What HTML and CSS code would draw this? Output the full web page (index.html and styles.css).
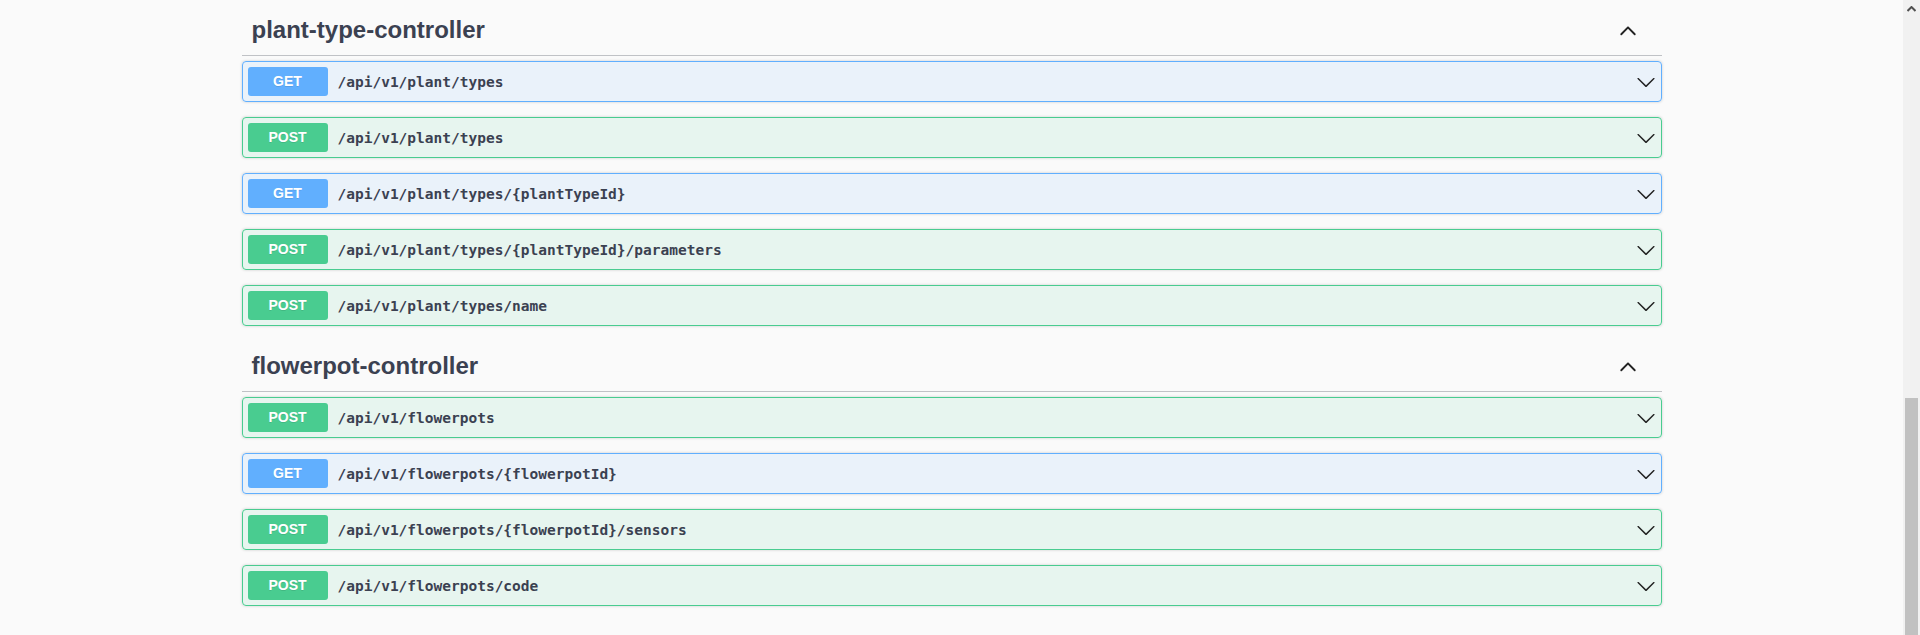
FILE: index.html
```html
<!DOCTYPE html>
<html lang="en">
<head>
<meta charset="utf-8">
<title>Swagger UI</title>
<link rel="stylesheet" href="styles.css">
</head>
<body>
<div class="page">
  <main class="main">
    <div class="wrapper">
      <section class="tag-section">
        <h3 class="tag">
          <span class="tag-name">plant-type-controller</span>
          <span class="tag-toggle"><svg width="20" height="20" viewBox="0 0 20 20"><path d="M17.418 14.908c-.374.374-.98.374-1.354 0L10 8.843 3.936 14.908c-.374.374-.98.374-1.354 0-.374-.373-.374-.98 0-1.353l6.74-6.74c.375-.375.98-.375 1.355 0l6.74 6.74c.375.374.375.98 0 1.354z"/></svg></span>
        </h3>
        <div class="op op-get"><div class="op-summary"><span class="method">GET</span><span class="path">/api/v1/plant/types</span><svg class="arrow" width="20" height="20" viewBox="0 0 20 20"><path d="M17.418 6.109c.272-.268.709-.268.979 0s.271.701 0 .969l-7.908 7.83c-.27.268-.707.268-.979 0l-7.908-7.83c-.27-.268-.27-.701 0-.969.271-.268.709-.268.979 0L10 13.25l7.418-7.141z"/></svg></div></div>
        <div class="op op-post"><div class="op-summary"><span class="method">POST</span><span class="path">/api/v1/plant/types</span><svg class="arrow" width="20" height="20" viewBox="0 0 20 20"><path d="M17.418 6.109c.272-.268.709-.268.979 0s.271.701 0 .969l-7.908 7.83c-.27.268-.707.268-.979 0l-7.908-7.830c-.27-.268-.27-.701 0-.969.271-.268.709-.268.979 0L10 13.25l7.418-7.141z"/></svg></div></div>
        <div class="op op-get"><div class="op-summary"><span class="method">GET</span><span class="path">/api/v1/plant/types/{plantTypeId}</span><svg class="arrow" width="20" height="20" viewBox="0 0 20 20"><path d="M17.418 6.109c.272-.268.709-.268.979 0s.271.701 0 .969l-7.908 7.83c-.27.268-.707.268-.979 0l-7.908-7.83c-.27-.268-.27-.701 0-.969.271-.268.709-.268.979 0L10 13.25l7.418-7.141z"/></svg></div></div>
        <div class="op op-post"><div class="op-summary"><span class="method">POST</span><span class="path">/api/v1/plant/types/{plantTypeId}/parameters</span><svg class="arrow" width="20" height="20" viewBox="0 0 20 20"><path d="M17.418 6.109c.272-.268.709-.268.979 0s.271.701 0 .969l-7.908 7.83c-.27.268-.707.268-.979 0l-7.908-7.83c-.27-.268-.27-.701 0-.969.271-.268.709-.268.979 0L10 13.25l7.418-7.141z"/></svg></div></div>
        <div class="op op-post"><div class="op-summary"><span class="method">POST</span><span class="path">/api/v1/plant/types/name</span><svg class="arrow" width="20" height="20" viewBox="0 0 20 20"><path d="M17.418 6.109c.272-.268.709-.268.979 0s.271.701 0 .969l-7.908 7.83c-.27.268-.707.268-.979 0l-7.908-7.83c-.27-.268-.27-.701 0-.969.271-.268.709-.268.979 0L10 13.25l7.418-7.141z"/></svg></div></div>
      </section>
      <section class="tag-section">
        <h3 class="tag">
          <span class="tag-name">flowerpot-controller</span>
          <span class="tag-toggle"><svg width="20" height="20" viewBox="0 0 20 20"><path d="M17.418 14.908c-.374.374-.98.374-1.354 0L10 8.843 3.936 14.908c-.374.374-.98.374-1.354 0-.374-.373-.374-.98 0-1.353l6.74-6.74c.375-.375.98-.375 1.355 0l6.74 6.740c.375.374.375.98 0 1.354z"/></svg></span>
        </h3>
        <div class="op op-post"><div class="op-summary"><span class="method">POST</span><span class="path">/api/v1/flowerpots</span><svg class="arrow" width="20" height="20" viewBox="0 0 20 20"><path d="M17.418 6.109c.272-.268.709-.268.979 0s.271.701 0 .969l-7.908 7.83c-.27.268-.707.268-.979 0l-7.908-7.83c-.27-.268-.27-.701 0-.969.271-.268.709-.268.979 0L10 13.25l7.418-7.141z"/></svg></div></div>
        <div class="op op-get"><div class="op-summary"><span class="method">GET</span><span class="path">/api/v1/flowerpots/{flowerpotId}</span><svg class="arrow" width="20" height="20" viewBox="0 0 20 20"><path d="M17.418 6.109c.272-.268.709-.268.979 0s.271.701 0 .969l-7.908 7.83c-.27.268-.707.268-.979 0l-7.908-7.83c-.27-.268-.27-.701 0-.969.271-.268.709-.268.979 0L10 13.25l7.418-7.141z"/></svg></div></div>
        <div class="op op-post"><div class="op-summary"><span class="method">POST</span><span class="path">/api/v1/flowerpots/{flowerpotId}/sensors</span><svg class="arrow" width="20" height="20" viewBox="0 0 20 20"><path d="M17.418 6.109c.272-.268.709-.268.979 0s.271.701 0 .969l-7.908 7.83c-.27.268-.707.268-.979 0l-7.908-7.83c-.27-.268-.27-.701 0-.969.271-.268.709-.268.979 0L10 13.25l7.418-7.141z"/></svg></div></div>
        <div class="op op-post"><div class="op-summary"><span class="method">POST</span><span class="path">/api/v1/flowerpots/code</span><svg class="arrow" width="20" height="20" viewBox="0 0 20 20"><path d="M17.418 6.109c.272-.268.709-.268.979 0s.271.701 0 .969l-7.908 7.83c-.27.268-.707.268-.979 0l-7.908-7.83c-.27-.268-.27-.701 0-.969.271-.268.709-.268.979 0L10 13.25l7.418-7.141z"/></svg></div></div>
      </section>
    </div>
  </main>
  <div class="scrollbar">
    <div class="sb-arrow"><svg width="9" height="6" viewBox="0 0 9 6"><path d="M0.5 5L4.5 1L8.5 5" fill="none" stroke="#505050" stroke-width="2"/></svg></div>
    <div class="sb-track"></div>
    <div class="sb-thumb"></div>
  </div>
</div>
</body>
</html>
```
FILE: styles.css
```css
html, body {
  margin: 0;
  padding: 0;
}
body {
  background: #fafafa;
  color: #3b4151;
  font-family: "Liberation Sans", Arial, sans-serif;
  height: 635px;
  overflow: hidden;
}
.page {
  display: flex;
  height: 635px;
}
.main {
  flex: 1;
  min-width: 0;
}
.wrapper {
  max-width: 1460px;
  margin: 0 auto;
  padding: 5px 20px 0;
  box-sizing: border-box;
}
.tag-section {
  display: flex;
  flex-direction: column;
}
.tag {
  display: flex;
  align-items: center;
  height: 30px;
  margin: 0 0 5px;
  padding: 10px 20px 10px 10px;
  border-bottom: 1px solid rgba(59, 65, 81, 0.3);
  font-size: 24px;
  font-weight: 700;
  color: #3b4151;
}
.tag-name {
  flex: 1;
  line-height: 30px;
}
.tag-toggle {
  display: flex;
  margin-right: 4px;
}
.tag-toggle svg {
  fill: #222;
}
.op {
  margin: 0 0 15px;
  border: 1px solid #000;
  border-radius: 4px;
  box-shadow: 0 0 3px rgba(0, 0, 0, 0.19);
}
.op-summary {
  display: flex;
  align-items: center;
  padding: 5px;
}
.method {
  min-width: 80px;
  padding: 6px 0;
  font-size: 14px;
  line-height: 17px;
  font-weight: 700;
  text-align: center;
  color: #fff;
  border-radius: 3px;
  text-shadow: 0 1px 0 rgba(0, 0, 0, 0.1);
}
.path {
  flex: 1;
  padding: 0 10px;
  font-family: "DejaVu Sans Mono", "Liberation Mono", monospace;
  font-size: 14.5px;
  font-weight: 700;
  color: #3b4151;
}
.arrow {
  flex: none;
  fill: #222;
}
.op-get {
  background: rgba(97, 175, 254, 0.1);
  border-color: #61affe;
}
.op-get .method {
  background: #61affe;
}
.op-post {
  background: rgba(73, 204, 144, 0.1);
  border-color: #49cc90;
}
.op-post .method {
  background: #49cc90;
}
.scrollbar {
  width: 17px;
  flex: none;
  display: flex;
  flex-direction: column;
  background: #f1f1f1;
}
.sb-arrow {
  height: 17px;
  display: flex;
  align-items: center;
  justify-content: center;
}
.sb-track {
  height: 381px;
}
.sb-thumb {
  flex: 1;
  margin: 0 2px;
  background: #c1c1c1;
}
```
